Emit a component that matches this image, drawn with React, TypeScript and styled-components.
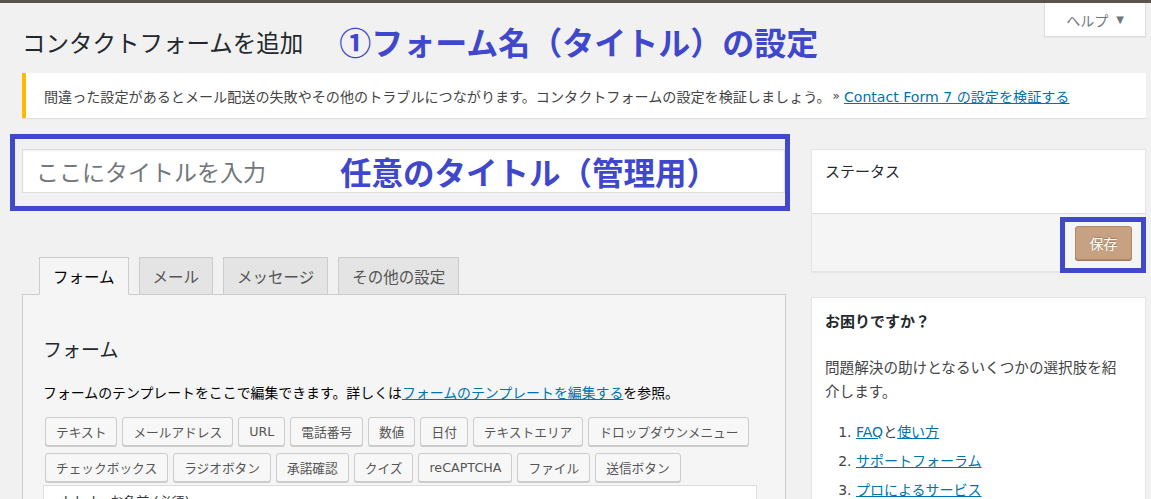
import React from 'react';
import styled, { createGlobalStyle } from 'styled-components';

const GlobalStyle = createGlobalStyle`
  html, body {
    margin: 0;
    padding: 0;
    overflow: hidden;
    background: #f1f1f1;
  }
  body {
    font-family: "DejaVu Sans", "Noto Sans CJK JP", sans-serif;
    color: #444;
    font-size: 14px;
    text-spacing-trim: space-all;
  }
  * {
    box-sizing: border-box;
  }
`;

const annotationBlue = '#3f48cc';
const cjk = '"Noto Sans CJK JP", "Noto Sans", sans-serif';

const tagButtons = [
  ['テキスト', 'メールアドレス', 'URL', '電話番号', '数値', '日付', 'テキストエリア', 'ドロップダウンメニュー'],
  ['チェックボックス', 'ラジオボタン', '承諾確認', 'クイズ', 'reCAPTCHA', 'ファイル', '送信ボタン'],
];

const tabs = ['フォーム', 'メール', 'メッセージ', 'その他の設定'];

const App = () => {
  return (
    <>
      <GlobalStyle />
      <TopBar />
      <Wrap>
        <HeaderRow>
          <PageTitle>コンタクトフォームを追加</PageTitle>
          <HeadNote>①フォーム名（タイトル）の設定</HeadNote>
          <HelpTab>
            ヘルプ <Arrow>▼</Arrow>
          </HelpTab>
        </HeaderRow>

        <Notice>
          間違った設定があるとメール配送の失敗やその他のトラブルにつながります。コンタクトフォームの設定を検証しましょう。
          <Raquo>»</Raquo>
          <Link href="#">Contact Form 7 の設定を検証する</Link>
        </Notice>

        <Columns>
          <Main>
            <TitleWrap>
              <TitleInput placeholder="ここにタイトルを入力" />
              <InputNote>任意のタイトル（管理用）</InputNote>
              <Frame $top={-15} $right={-5} $bottom={-18} $left={-12} />
            </TitleWrap>

            <TabRow>
              {tabs.map((t, i) => (
                <Tab key={t} $active={i === 0}>
                  {t}
                </Tab>
              ))}
            </TabRow>

            <Panel>
              <PanelTitle>フォーム</PanelTitle>
              <PanelText>
                フォームのテンプレートをここで編集できます。詳しくは
                <Link href="#">フォームのテンプレートを編集する</Link>を参照。
              </PanelText>
              {tagButtons.map((row, i) => (
                <TagRow key={i}>
                  {row.map((b) => (
                    <TagButton key={b}>{b}</TagButton>
                  ))}
                </TagRow>
              ))}
              <Template
                defaultValue={'<label> お名前 (必須)\n    [text* your-name] </label>\n\n<label> メールアドレス (必須)\n    [email* your-email] </label>'}
              />
            </Panel>
          </Main>

          <Sidebar>
            <Box>
              <StatusHead>ステータス</StatusHead>
              <StatusFoot>
                <SaveWrap>
                  <SaveButton>保存</SaveButton>
                  <Frame $top={-9} $right={-14} $bottom={-13} $left={-15} />
                </SaveWrap>
              </StatusFoot>
            </Box>

            <HelpBox>
              <HelpTitle>お困りですか？</HelpTitle>
              <HelpText>問題解決の助けとなるいくつかの選択肢を紹介します。</HelpText>
              <HelpList>
                <li>
                  <Link href="#">FAQ</Link>と<Link href="#">使い方</Link>
                </li>
                <li>
                  <Link href="#">サポートフォーラム</Link>
                </li>
                <li>
                  <Link href="#">プロによるサービス</Link>
                </li>
              </HelpList>
            </HelpBox>
          </Sidebar>
        </Columns>
      </Wrap>
    </>
  );
};

const TopBar = styled.div`
  height: 3px;
  background: #5b534d;
`;

const Wrap = styled.div`
  padding: 0 5px 0 22px;
`;

const HeaderRow = styled.div`
  display: flex;
  align-items: flex-start;
`;

const PageTitle = styled.h1`
  margin: 0;
  padding-top: 26px;
  font-size: 23.5px;
  line-height: 30px;
  font-weight: 400;
  color: #23282d;
  white-space: nowrap;
`;

const HeadNote = styled.div`
  margin-left: 36px;
  padding-top: 20px;
  font-family: ${cjk};
  font-size: 32px;
  line-height: 36px;
  font-weight: 700;
  color: ${annotationBlue};
  white-space: nowrap;
`;

const HelpTab = styled.div`
  margin-left: auto;
  width: 102px;
  height: 34px;
  display: flex;
  align-items: center;
  justify-content: center;
  gap: 8px;
  background: #fff;
  border: 1px solid #ddd;
  border-top: none;
  box-shadow: 0 1px 1px rgba(0, 0, 0, 0.04);
  color: #72777c;
  font-size: 14px;
`;

const Arrow = styled.span`
  font-size: 10px;
  color: #72777c;
`;

const Notice = styled.div`
  margin-top: 14px;
  height: 45px;
  display: flex;
  align-items: center;
  padding: 0 12px 0 18px;
  background: #fff;
  border-left: 4px solid #ffb900;
  box-shadow: 0 1px 1px rgba(0, 0, 0, 0.08);
  font-size: 14.1px;
  color: #444;
  white-space: nowrap;
`;

const Raquo = styled.span`
  margin: 0 4px 0 2px;
  font-size: 12px;
`;

const Link = styled.a`
  color: #0073aa;
  text-decoration: underline;
`;

const Columns = styled.div`
  margin-top: 31px;
  display: flex;
  gap: 25px;
  align-items: flex-start;
`;

const Main = styled.div`
  width: 764px;
`;

const TitleWrap = styled.div`
  position: relative;
  width: 763px;
`;

const TitleInput = styled.input`
  display: block;
  width: 100%;
  height: 44px;
  padding: 0 13px;
  border: 1px solid #ddd;
  background: #fff;
  box-shadow: inset 0 1px 2px rgba(0, 0, 0, 0.07);
  font-family: ${cjk};
  font-size: 23px;
  color: #32373c;
  outline: none;

  &::placeholder {
    color: #72777c;
  }
`;

const InputNote = styled.div`
  position: absolute;
  left: 318px;
  top: 4px;
  font-family: ${cjk};
  font-size: 31.5px;
  line-height: 36px;
  font-weight: 700;
  color: ${annotationBlue};
  pointer-events: none;
  white-space: nowrap;
`;

const Frame = styled.div<{ $top: number; $right: number; $bottom: number; $left: number }>`
  position: absolute;
  top: ${(p) => p.$top}px;
  right: ${(p) => p.$right}px;
  bottom: ${(p) => p.$bottom}px;
  left: ${(p) => p.$left}px;
  border: 5px solid #4048cc;
  pointer-events: none;
`;

const TabRow = styled.div`
  margin-top: 64px;
  display: flex;
  gap: 10px;
  padding-left: 17px;
`;

const Tab = styled.div<{ $active?: boolean }>`
  height: 38px;
  margin-bottom: -1px;
  padding: 0 13px;
  display: flex;
  align-items: center;
  border: 1px solid #ccc;
  border-bottom-color: ${(p) => (p.$active ? '#f5f5f5' : '#ccc')};
  background: ${(p) => (p.$active ? '#f5f5f5' : '#e4e4e4')};
  color: ${(p) => (p.$active ? '#000' : '#555')};
  font-size: 15.5px;
  position: relative;
  z-index: ${(p) => (p.$active ? 1 : 0)};
`;

const Panel = styled.div`
  background: #f5f5f5;
  border: 1px solid #ccc;
  padding: 42px 28px 0 20px;
  height: 260px;
`;

const PanelTitle = styled.h2`
  margin: 0;
  font-size: 19px;
  line-height: 26px;
  font-weight: 400;
  color: #23282d;
`;

const PanelText = styled.p`
  margin: 20px 0 14px;
  font-size: 13.9px;
  line-height: 20px;
  color: #000;
  white-space: nowrap;
`;

const TagRow = styled.div`
  display: flex;
  gap: 5px;
  margin: 0 0 7px 2px;

  &:last-of-type {
    margin-bottom: 3px;
  }
`;

const TagButton = styled.button`
  height: 29px;
  padding: 0 10px;
  border: 1px solid #ccc;
  border-radius: 3px;
  background: #f7f7f7;
  box-shadow: 0 1px 0 #ccc;
  font-family: inherit;
  font-size: 12.7px;
  color: #555;
  white-space: nowrap;
`;

const Template = styled.textarea`
  display: block;
  width: 714px;
  height: 200px;
  margin-top: 3px;
  padding: 6px 9px;
  border: 1px solid #ddd;
  background: #fff;
  font-family: inherit;
  font-size: 13px;
  line-height: 20px;
  color: #32373c;
  resize: none;
  outline: none;
`;

const Sidebar = styled.div`
  width: 335px;
`;

const Box = styled.div`
  background: #fff;
  border: 1px solid #e5e5e5;
  box-shadow: 0 1px 1px rgba(0, 0, 0, 0.04);
`;

const StatusHead = styled.div`
  height: 63px;
  padding: 12px 13px 0;
  font-size: 15px;
  line-height: 20px;
  color: #23282d;
`;

const StatusFoot = styled.div`
  height: 58px;
  border-top: 1px solid #ddd;
  background: #f5f5f5;
  display: flex;
  align-items: center;
  justify-content: flex-end;
  padding: 0 13px 0 0;
`;

const SaveWrap = styled.div`
  position: relative;
`;

const SaveButton = styled.button`
  width: 57px;
  height: 34px;
  border: 1px solid #b08969;
  border-radius: 3px;
  background: #c6a182;
  box-shadow: 0 1px 0 #a17a5a;
  color: #fff;
  font-family: inherit;
  font-size: 14px;
  text-shadow: 0 -1px 1px #a07a5a;
`;

const HelpBox = styled(Box)`
  margin-top: 25px;
  height: 240px;
  padding: 14px 16px 0 13px;
`;

const HelpTitle = styled.h3`
  margin: 0;
  font-size: 15px;
  line-height: 20px;
  font-weight: 700;
  color: #23282d;
`;

const HelpText = styled.p`
  margin: 24px 0 0;
  font-size: 14.6px;
  line-height: 24px;
  color: #444;
`;

const HelpList = styled.ol`
  margin: 17px 0 0;
  padding-left: 31px;
  font-size: 14px;
  line-height: 22px;
  color: #444;

  li {
    margin-bottom: 7px;
  }
`;

export default App;
